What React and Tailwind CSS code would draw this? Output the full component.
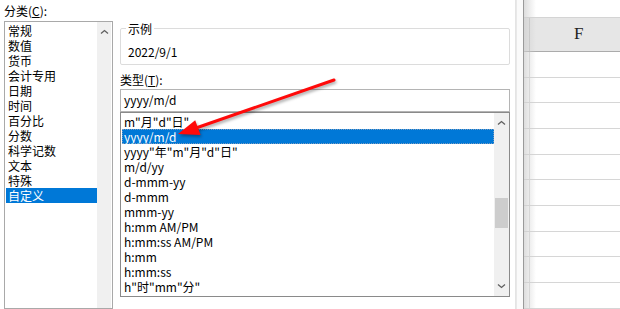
import React from "react";

const font = { fontFamily: '"Noto Sans CJK SC", "Noto Sans", sans-serif' };

const categories = ["常规", "数值", "货币", "会计专用", "日期", "时间", "百分比", "分数", "科学记数", "文本", "特殊", "自定义"];

const formats = [
  'm"月"d"日"',
  "yyyy/m/d",
  'yyyy"年"m"月"d"日"',
  "m/d/yy",
  "d-mmm-yy",
  "d-mmm",
  "mmm-yy",
  "h:mm AM/PM",
  "h:mm:ss AM/PM",
  "h:mm",
  "h:mm:ss",
  'h"时"mm"分"',
];

const rowHeights = [26, 25, 26, 26, 25, 26, 26, 25, 26, 26];

function Chevron({ down }) {
  return (
    <svg width="9" height="6" viewBox="0 0 9 6" className="text-[#606060]">
      <path
        d={down ? "M1 1.5 L4.5 4.5 L8 1.5" : "M1 4.5 L4.5 1.5 L8 4.5"}
        fill="none"
        stroke="currentColor"
        strokeWidth="1.3"
      />
    </svg>
  );
}

function CategoryList() {
  return (
    <div className="ml-[4px] mt-[3px] flex h-[300px] w-[109px] border border-[#a9a9a9] bg-white">
      <div className="flex w-[92px] flex-col pl-[1px] pt-[1px]">
        {categories.map((c) => (
          <div
            key={c}
            className={
              "h-[15px] pl-[2px] text-[12px] leading-[15px] " +
              (c === "自定义" ? "bg-[#0078d7] text-white" : "text-black")
            }
          >
            {c}
          </div>
        ))}
      </div>
      <div className="flex w-[14px] flex-col items-center bg-[#f0f0f0] pt-[7px]">
        <Chevron />
      </div>
    </div>
  );
}

function FormatList() {
  return (
    <div className="flex h-[185px] w-[390px] border border-[#8a8a8a] bg-white">
      <div className="flex flex-1 flex-col pl-[1px] pt-[1px]">
        {formats.map((f, i) => (
          <div
            key={f}
            className={
              "h-[15px] whitespace-pre pl-[2px] text-[12px] leading-[15px] " +
              (i === 1 ? "bg-[#0078d7] text-white outline-1 outline-dotted -outline-offset-1 outline-[#7a9cc0]" : "text-black")
            }
          >
            {f}
          </div>
        ))}
      </div>
      <div className="flex w-[15px] flex-col items-center bg-[#f0f0f0]">
        <div className="pt-[7px]">
          <Chevron />
        </div>
        <div className="mt-[72px] h-[30px] w-[13px] bg-[#cdcdcd]" />
        <div className="mt-auto pb-[7px]">
          <Chevron down />
        </div>
      </div>
    </div>
  );
}

function Sheet() {
  return (
    <div className="relative flex h-full flex-1 border-l border-[#e8e8e8] bg-white">
      <div className="w-[6px] bg-[#fafafa]" />
      <div className="relative flex flex-1 flex-col border-l border-[#9a9a9a]">
        <div className="h-[18px] border-b border-[#d4d4d4] bg-white" />
        <div className="flex h-[34px] border-b border-[#ababab] bg-[#e6e6e6]">
          <div className="w-[6px] border-r border-[#c6c6c6]" />
          <div
            className="flex-1 pl-[44px] pt-[6px] text-[17px] leading-[20px] text-[#222]"
            style={{ fontFamily: '"Liberation Serif", serif' }}
          >
            F
          </div>
        </div>
        {rowHeights.map((h, i) => (
          <div
            key={i}
            className="flex border-b border-[#d6d6d6] bg-white"
            style={{ height: h }}
          >
            <div className="w-[6px] border-r border-[#dcdcdc]" />
          </div>
        ))}
        <div className="pointer-events-none absolute inset-y-0 left-0 w-[12px] bg-gradient-to-r from-[#cfcfcf] to-transparent opacity-70" />
      </div>
    </div>
  );
}

function Arrow() {
  return (
    <svg
      className="pointer-events-none absolute left-0 top-0"
      width="620"
      height="309"
      style={{ filter: "drop-shadow(1px 2px 1.5px rgba(0,0,0,0.35))" }}
    >
      <line x1="334" y1="80" x2="196" y2="128" stroke="#ff0a0a" strokeWidth="3" strokeLinecap="round" />
      <polygon points="178,134 195.2,120.3 200.6,135" fill="#ff0a0a" />
    </svg>
  );
}

export default function App() {
  return (
    <div className="relative flex h-[309px] w-[620px] overflow-hidden bg-white text-black" style={font}>
      <div className="flex h-full w-[516px] border-r border-[#e4e4e4]">
        <div className="flex w-[120px] flex-col">
          <div className="ml-[4px] mt-[3px] h-[15px] text-[12px] leading-[15px]">
            分类(<span className="underline">C</span>):
          </div>
          <CategoryList />
        </div>
        <div className="flex w-[390px] flex-col">
          <div className="relative mt-[28px] h-[37px] rounded-[2px] border border-[#dcdcdc] pl-[7px] pt-[15px] text-[12px] leading-[15px]">
            <span className="absolute -top-[8px] left-[5px] bg-white px-[2px] leading-[15px]">示例</span>
            2022/9/1
          </div>
          <div className="mt-[7px] h-[15px] text-[12px] leading-[15px]">
            类型(<span className="underline">T</span>):
          </div>
          <div className="mt-[2px] h-[23px] border border-[#b4b4b4] pl-[3px] text-[12px] leading-[20px]">
            yyyy/m/d
          </div>
          <FormatList />
        </div>
      </div>
      <Sheet />
      <Arrow />
    </div>
  );
}
